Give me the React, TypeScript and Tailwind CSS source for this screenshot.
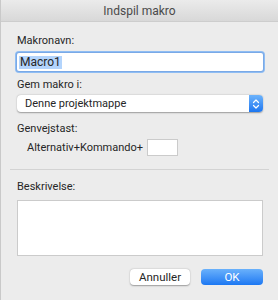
import React, { useState } from "react";

const font = { fontFamily: "Roboto, 'Noto Sans', sans-serif" };

function Stepper() {
  return (
    <div className="flex h-full w-[14px] items-center justify-center rounded-r-[4px] bg-gradient-to-b from-[#6cb3fb] to-[#1b76f0]">
      <svg width="8" height="12" viewBox="0 0 8 12" fill="none">
        <path d="M1.5 4.5 L4 2 L6.5 4.5" stroke="white" strokeWidth="1.2" strokeLinecap="round" strokeLinejoin="round" />
        <path d="M1.5 7.5 L4 10 L6.5 7.5" stroke="white" strokeWidth="1.2" strokeLinecap="round" strokeLinejoin="round" />
      </svg>
    </div>
  );
}

export default function App() {
  const [name] = useState("Macro1");

  return (
    <div
      className="flex h-[300px] w-[278px] flex-col overflow-hidden border-l border-[#c9c9c9] bg-[#ececec] text-[11px] text-[#262626]"
      style={font}
    >
      {/* Title bar */}
      <div className="flex h-[22px] shrink-0 items-center justify-center border-b border-[#cdcdcd] bg-gradient-to-b from-[#ebebeb] to-[#d8d8d8] text-[12px] text-[#4a4a4a]">
        Indspil makro
      </div>

      <div className="flex flex-col pl-[16px] pr-[15px]">
        <label className="mt-[11px] h-[16px] leading-[16px]">Makronavn:</label>
        <div className="mt-[4px] flex h-[18px] items-center rounded-[2px] bg-white shadow-[0_0_0_2px_#8fbdf3] ring-1 ring-[#7aa9e6]">
          <span className="ml-[2px] inline-block h-[13px] bg-[#b3d4fc] px-[1px] text-[12px] leading-[13px]">{name}</span>
        </div>

        <label className="mt-[6px] h-[16px] leading-[16px]">Gem makro i:</label>
        <div className="mt-[2px] flex h-[17px] items-stretch rounded-[4px] bg-white shadow-[0_0.5px_1.5px_rgba(0,0,0,0.35)]">
          <span className="flex-1 pl-[8px] leading-[17px]">Denne projektmappe</span>
          <Stepper />
        </div>

        <label className="mt-[9px] h-[16px] leading-[16px]">Genvejstast:</label>
        <div className="mt-[2px] flex h-[17px] items-center pl-[10px]">
          <span className="w-[120px] leading-[17px]">Alternativ+Kommando+</span>
          <div className="h-[17px] w-[31px] border border-[#cbcbcb] bg-white" />
        </div>
      </div>

      <div className="mx-[9px] mt-[13px] h-px bg-[#d3d3d3]" />

      <div className="flex flex-col pl-[16px] pr-[15px]">
        <label className="mt-[9px] h-[16px] leading-[16px]">Beskrivelse:</label>
        <div className="mt-[5px] h-[56px] border border-[#cbcbcb] bg-white" />

        <div className="mt-[13px] flex justify-end gap-[11px]">
          <button className="h-[16px] w-[60px] rounded-[4px] bg-white text-[11.5px] leading-[16px] text-[#262626] shadow-[0_0.5px_1.5px_rgba(0,0,0,0.35)]" style={font}>
            Annuller
          </button>
          <button className="h-[16px] w-[62px] rounded-[4px] bg-gradient-to-b from-[#69b1fb] to-[#1a77f2] text-[11.5px] leading-[16px] text-white" style={font}>
            OK
          </button>
        </div>
      </div>
    </div>
  );
}
